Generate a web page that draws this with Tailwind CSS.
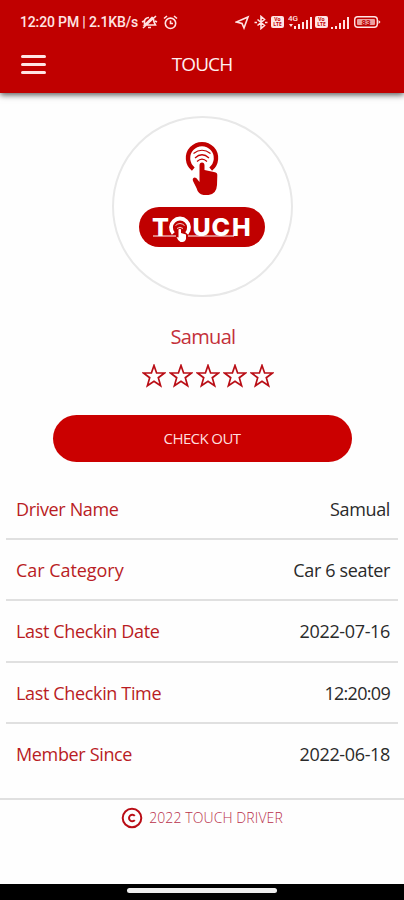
<!DOCTYPE html>
<html lang="en">

<head>
  <meta charset="UTF-8">
  <meta name="viewport" content="width=device-width, initial-scale=1.0">
  <script src="https://cdn.jsdelivr.net/npm/@tailwindcss/browser@4"></script>
  <title>Touch Driver</title>
</head>

<body class="flex flex-col h-[900px] w-[404px] bg-[#fefefe] overflow-hidden font-['Open_Sans',sans-serif]">
  <header class="h-[93px] shrink-0 bg-[#c00000] text-white shadow-[0_2px_6px_rgba(0,0,0,0.65)]">
    <!-- status bar -->
    <div class="flex items-center h-[44px] pl-5 pr-[23px] text-[#ffe4e4]">
      <span class="w-[119px] whitespace-nowrap font-[Roboto,sans-serif] text-[14px] font-medium tracking-[-0.15px]">12:20 PM | 2.1KB/s</span>
      <svg class="ml-[2px] w-[17px] h-[16px]" viewBox="0 0 17 16" fill="none" stroke="currentColor" stroke-width="1.6">
        <path d="M3.500 11L11 3.500Q13 5 13 8L14.500 11zM3.500 10.500V7Q4 4 8 3.500M7 13.500h3M2 14L15 2M1 8l2-1M14 7l2 1" />
      </svg>
      <svg class="ml-[5px] w-[15px] h-[15px]" viewBox="0 0 15 15" fill="none" stroke="currentColor" stroke-width="1.6">
        <circle cx="7.500" cy="8.300" r="5.200" />
        <path d="M1 3.500L4 1M14 3.500L11 1M7.500 5.500v3H10" />
      </svg>
      <svg class="ml-auto w-[15px] h-[15px]" viewBox="0 0 15 15" fill="none" stroke="currentColor" stroke-width="1.6">
        <path d="M1.500 7L13 2L9 13L7 8.500z" />
      </svg>
      <svg class="ml-[4px] w-[14px] h-[15px]" viewBox="0 0 14 15" fill="none" stroke="currentColor" stroke-width="1.6">
        <path d="M3.500 4.500l7 6L7 13.500v-12l3.500 3l-7 6M0.500 7.500h2.500M11 7.500h2.500" />
      </svg>
      <span class="ml-[3px] flex flex-col items-center justify-center w-[13px] h-[12px] rounded-[2px] bg-[#ffe4e4] text-[#c00000] text-[5px] leading-[5px] font-bold"><i class="not-italic">Vo</i><i class="not-italic">LTE</i></span>
      <svg class="ml-[4px] w-[25px] h-[15px]" viewBox="0 0 25 15" fill="currentColor">
        <text x="0" y="6" font-family="Roboto" font-size="8" font-weight="500">4G</text>
        <path d="M1 9h4l-2 3zM6 11h2v3H6zM10 9h2v5h-2zM14 7h2v7h-2zM18 5h2v9h-2zM22 2h2v12h-2z" />
      </svg>
      <span class="ml-[2px] flex flex-col items-center justify-center w-[13px] h-[12px] rounded-[2px] bg-[#ffe4e4] text-[#c00000] text-[5px] leading-[5px] font-bold"><i class="not-italic">Vo</i><i class="not-italic">LTE</i></span>
      <svg class="ml-[3px] w-[19px] h-[15px]" viewBox="0 0 19 15" fill="currentColor">
        <path d="M0 12h2v2H0zM4 11h2v3H4zM8 8h2v6H8zM12 5h2v9h-2zM16 2h2v12h-2z" />
      </svg>
      <svg class="ml-[3px] w-[28px] h-[14px]" viewBox="0 0 28 14">
        <rect x="1.700" y="1.700" width="22.600" height="10.600" rx="3" fill="none" stroke="currentColor" stroke-width="1.400" />
        <rect x="4" y="4" width="18" height="6" rx="1" fill="currentColor" opacity=".7" />
        <path d="M25.500 5l2 2l-2 2z" fill="currentColor" />
        <text x="13" y="9.800" text-anchor="middle" font-family="Roboto" font-size="8" font-weight="700" fill="#c00000">83</text>
      </svg>
    </div>
    <!-- title bar -->
    <div class="grid grid-cols-[1fr_auto_1fr] items-center h-[40px] px-[21px]">
      <div class="flex flex-col gap-[5px]">
        <span class="w-[25px] h-[3px] rounded-full bg-[#ffe4e4]"></span>
        <span class="w-[25px] h-[3px] rounded-full bg-[#ffe4e4]"></span>
        <span class="w-[25px] h-[3px] rounded-full bg-[#ffe4e4]"></span>
      </div>
      <h1 class="text-[19px] tracking-[-0.9px] text-[#fff0f0]">TOUCH</h1>
    </div>
  </header>

  <main class="flex flex-col items-center shrink-0">
    <div class="mt-[23px] flex flex-col items-center w-[181px] h-[181px] rounded-full border-2 border-[#e8e8e8] bg-white">
      <svg class="mt-[23px] w-[36px] h-[56px]" viewBox="0 0 36 56">
        <path d="M9.300 28.100A14 14 0 1 1 26.700 28.100" fill="none" stroke="#c00000" stroke-width="4.400" />
        <g fill="none" stroke="#c00000" stroke-width="1.200">
          <path d="M9.500 12.500Q18 6 26.500 12.500M11 17Q18 10.500 25 17M13 20.500Q18 15.500 23 20.500" />
        </g>
        <path d="M15.500 24.500q0-3 2.500-3t2.500 3V29l10.500 2.200q2.500.6 2.300 3.300L33 44q-.5 9-8.500 10h-5Q14 53 12.500 47L9 40q-1-3 1.500-3.500q2 0 3 2l2 2.500z" fill="#c00000" />
      </svg>
      <div class="mt-[10px] w-[126px] h-[40px] rounded-full bg-[#c00000]">
        <svg class="w-full h-full" viewBox="0 0 126 40" fill="#fff">
          <text y="28.500" font-family="Inter" font-size="25" font-weight="800">
            <tspan x="13">T</tspan><tspan x="53.500">U</tspan><tspan x="72.500">C</tspan><tspan x="93">H</tspan>
          </text>
          <path d="M34.300 26.500A9 9 0 1 1 47.700 26.500" fill="none" stroke="#fff" stroke-width="3.800" />
          <path d="M36.500 18.500q4.500-4 9 0M38 21.500q3-2.500 6 0" fill="none" stroke="#fff" stroke-width=".8" />
          <path d="M14 28.500h23v1H14zM49 28.500h46v1H49z" />
          <path d="M39.500 22.500q1.500-1.500 2.500 0V26l5 1.500V32q-1 3-3.500 3h-2q-2.500-1-4-5l2 .5z" />
        </svg>
      </div>
    </div>

    <h2 class="mt-[25px] ml-[2px] text-[20px] leading-[30px] tracking-[-0.7px] text-[#c4303a]">Samual</h2>
    <div class="mt-[12px] ml-[11px] flex gap-[3px]">
      <svg class="w-6 h-6" viewBox="0 0 24 24" fill="none" stroke="#b90d15" stroke-width="1.700"><path d="M12 1.500l2.600 7.500h8l-6.300 4.700l2.300 8L12 17.200l-6.600 4.500l2.300-8L1.400 9h8z" /></svg>
      <svg class="w-6 h-6" viewBox="0 0 24 24" fill="none" stroke="#b90d15" stroke-width="1.700"><path d="M12 1.500l2.600 7.500h8l-6.300 4.700l2.300 8L12 17.200l-6.600 4.500l2.300-8L1.400 9h8z" /></svg>
      <svg class="w-6 h-6" viewBox="0 0 24 24" fill="none" stroke="#b90d15" stroke-width="1.700"><path d="M12 1.500l2.600 7.500h8l-6.300 4.700l2.300 8L12 17.200l-6.600 4.500l2.300-8L1.400 9h8z" /></svg>
      <svg class="w-6 h-6" viewBox="0 0 24 24" fill="none" stroke="#b90d15" stroke-width="1.700"><path d="M12 1.500l2.600 7.500h8l-6.300 4.700l2.300 8L12 17.200l-6.600 4.500l2.300-8L1.400 9h8z" /></svg>
      <svg class="w-6 h-6" viewBox="0 0 24 24" fill="none" stroke="#b90d15" stroke-width="1.700"><path d="M12 1.500l2.600 7.500h8l-6.300 4.700l2.300 8L12 17.200l-6.600 4.500l2.300-8L1.400 9h8z" /></svg>
    </div>
    <button class="mt-[27px] w-[299px] h-[47px] rounded-full bg-[#cb0000] text-[#ffdede] text-[15px] tracking-[-0.6px]">CHECK OUT</button>
  </main>

  <!-- driver details -->
  <dl class="mt-[17px] mx-[6px] shrink-0 text-[18px] tracking-[-0.35px] text-[#2a2a2a]">
    <div class="flex items-center justify-between h-[61px] pt-[2px] pl-[10px] pr-[8px] border-b-2 border-[#e0e0e0]">
      <dt class="text-[#b91c24]">Driver Name</dt>
      <dd>Samual</dd>
    </div>
    <div class="flex items-center justify-between h-[61px] pt-[2px] pl-[10px] pr-[8px] border-b-2 border-[#e0e0e0]">
      <dt class="text-[#b91c24] tracking-[-0.05px]">Car Category</dt>
      <dd>Car 6 seater</dd>
    </div>
    <div class="flex items-center justify-between h-[62px] pt-[1px] pl-[10px] pr-[8px] border-b-2 border-[#e0e0e0]">
      <dt class="text-[#b91c24]">Last Checkin Date</dt>
      <dd>2022-07-16</dd>
    </div>
    <div class="flex items-center justify-between h-[61px] pt-[2px] pl-[10px] pr-[8px] border-b-2 border-[#e0e0e0]">
      <dt class="text-[#b91c24]">Last Checkin Time</dt>
      <dd class="tracking-[-0.7px]">12:20:09</dd>
    </div>
    <div class="flex items-center justify-between h-[60px] pl-[10px] pr-[8px]">
      <dt class="text-[#b91c24]">Member Since</dt>
      <dd>2022-06-18</dd>
    </div>
  </dl>

  <footer class="mt-auto shrink-0">
    <div class="flex justify-center items-start h-[86px] pt-[7px] border-t-2 border-[#e0e0e0]">
      <svg class="w-[22px] h-[22px]" viewBox="0 0 22 22" fill="none" stroke="#b90d15" stroke-width="2">
        <circle cx="11" cy="11" r="9.300" />
        <path d="M13.800 8.800A3.300 3.300 0 1 0 13.800 13.200" />
      </svg>
      <p class="ml-[6px] text-[14px] leading-[22px] tracking-[0.1px] font-light text-[#b9304a]">2022 TOUCH DRIVER</p>
    </div>
    <div class="flex justify-center h-[16px] pt-[4px] bg-black">
      <div class="w-[150px] h-[5px] rounded-full bg-[#eee]"></div>
    </div>
  </footer>
</body>

</html>
